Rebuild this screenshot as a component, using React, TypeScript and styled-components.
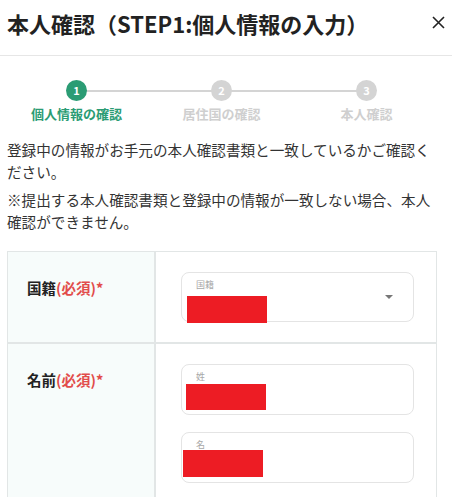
import React from 'react'
import styled, { createGlobalStyle } from 'styled-components'

const GREEN = '#2b9c74'
const GRAY = '#d4d4d4'
const LINE = '#e2e6e6'

const GlobalStyle = createGlobalStyle`
	html, body {
		margin: 0;
		padding: 0;
		background: #fff;
	}
	body {
		font-family: "Noto Sans CJK JP", "Noto Sans", sans-serif;
		color: #222;
		-webkit-font-smoothing: antialiased;
	}
`

const Page = styled.div`
	width: 452px;
	height: 497px;
	overflow: hidden;
	background: #fff;
`

const Header = styled.div`
	height: 55px;
	display: flex;
	align-items: center;
	justify-content: space-between;
	padding: 0 7px 0 7px;
	border-bottom: 1px solid #e6e6e6;
	box-sizing: content-box;
`

const Title = styled.h1`
	margin: 0;
	font-size: 22px;
	font-weight: 700;
	line-height: 30px;
	letter-spacing: 0;
	color: #222;
	margin-top: -9px;
`

const Close = styled.button`
	width: 13px;
	height: 13px;
	padding: 0;
	border: none;
	background: none;
	display: flex;
	margin-top: -11px;
	cursor: pointer;
`

const Body = styled.div`
	padding: 0 7px;
`

const Steps = styled.ol`
	list-style: none;
	margin: 0 0 0 -3px;
	width: 435px;
	padding: 25px 0 0;
	display: grid;
	grid-template-columns: repeat(3, 1fr);
`

const Step = styled.li<{ $first?: boolean }>`
	position: relative;
	display: flex;
	flex-direction: column;
	align-items: center;
	gap: 4px;

	&::before {
		content: '';
		display: ${p => (p.$first ? 'none' : 'block')};
		position: absolute;
		top: 9px;
		left: -50%;
		right: 50%;
		height: 2px;
		background: ${GRAY};
	}
`

const Dot = styled.span<{ $active?: boolean }>`
	position: relative;
	z-index: 1;
	width: 21px;
	height: 21px;
	margin-top: -1px;
	border-radius: 50%;
	background: ${p => (p.$active ? GREEN : GRAY)};
	color: #fff;
	font-size: 11px;
	font-weight: 700;
	line-height: 21px;
	text-align: center;
`

const StepLabel = styled.span<{ $active?: boolean }>`
	font-size: 13px;
	font-weight: 700;
	line-height: 18px;
	color: ${p => (p.$active ? GREEN : '#cfcfcf')};
`

const Note = styled.p`
	margin: 16px 0 0;
	width: 430px;
	font-size: 14.6px;
	line-height: 22px;
	color: #333;

	& + & {
		margin-top: 6px;
	}
`

const Table = styled.div`
	margin-top: 18px;
	width: 430px;
	display: grid;
	grid-template-columns: 148px 1fr;
`

const LabelCell = styled.div`
	border: 1px solid ${LINE};
	background: #f7fcfb;
	padding: 26px 0 0 19px;
	font-size: 14.5px;
	font-weight: 700;
	line-height: 20px;
	color: #222;
`

const Required = styled.span`
	color: #e24c4b;
`

const InputCell = styled.div`
	border: 1px solid ${LINE};
	padding: 20px 22px 20px 25px;
	display: flex;
	flex-direction: column;
	gap: 17px;
`

const Field = styled.div<{ $h?: number }>`
	position: relative;
	height: ${p => p.$h ?? 51}px;
	box-sizing: border-box;
	border: 1px solid #e4e4e4;
	border-radius: 8px;
	background: #fff;
	padding-top: 6px;
`

const FieldLabel = styled.div`
	margin-left: 14px;
	font-size: 9px;
	line-height: 12px;
	color: #a8a8a8;
`

const Redacted = styled.div<{ $x: number; $top: number; $h?: number }>`
	margin: ${p => p.$top}px 0 0 ${p => p.$x}px;
	width: 80px;
	height: ${p => p.$h ?? 27}px;
	background: #ed1c24;
`

const Caret = styled.span`
	position: absolute;
	right: 20px;
	top: 22px;
	width: 0;
	height: 0;
	border-left: 4.5px solid transparent;
	border-right: 4.5px solid transparent;
	border-top: 4.5px solid #777;
`

const steps = ['個人情報の確認', '居住国の確認', '本人確認']

export default function App() {
	return (
		<Page>
			<GlobalStyle />
			<Header>
				<Title>本人確認（STEP1:個人情報の入力）</Title>
				<Close aria-label="閉じる">
					<svg width="13" height="13" viewBox="0 0 13 13">
						<path d="M1 1L12 12M12 1L1 12" stroke="#222" strokeWidth="1.6" fill="none" />
					</svg>
				</Close>
			</Header>
			<Body>
				<Steps>
					{steps.map((s, i) => (
						<Step key={s} $first={i === 0}>
							<Dot $active={i === 0}>{i + 1}</Dot>
							<StepLabel $active={i === 0}>{s}</StepLabel>
						</Step>
					))}
				</Steps>
				<Note>登録中の情報がお手元の本人確認書類と一致しているかご確認ください。</Note>
				<Note>※提出する本人確認書類と登録中の情報が一致しない場合、本人確認ができません。</Note>
				<Table>
					<LabelCell>
						国籍<Required>(必須)*</Required>
					</LabelCell>
					<InputCell>
						<Field $h={50}>
							<FieldLabel>国籍</FieldLabel>
							<Redacted $x={5} $top={5} />
							<Caret />
						</Field>
					</InputCell>
					<LabelCell>
						名前<Required>(必須)*</Required>
					</LabelCell>
					<InputCell>
						<Field>
							<FieldLabel>姓</FieldLabel>
							<Redacted $x={4} $top={1} $h={26} />
						</Field>
						<Field>
							<FieldLabel>名</FieldLabel>
							<Redacted $x={1} $top={-1} />
						</Field>
					</InputCell>
				</Table>
			</Body>
		</Page>
	)
}
